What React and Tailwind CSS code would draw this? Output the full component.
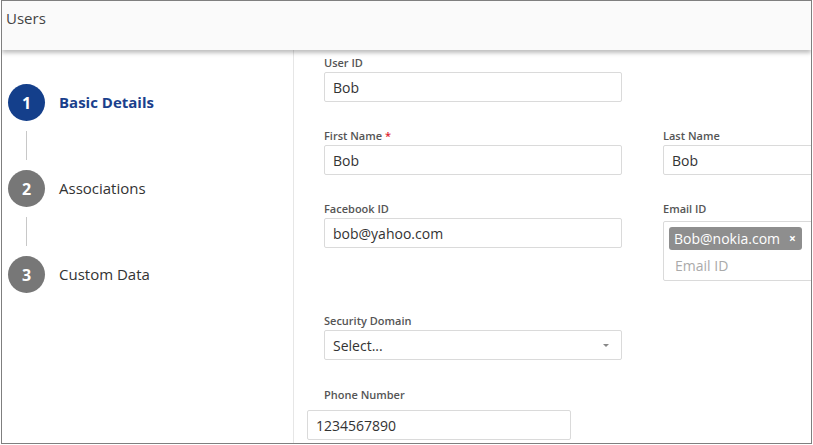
import React from 'react';

const font = { fontFamily: '"Open Sans", "Noto Sans", sans-serif' };

const steps = [
  { n: 1, label: 'Basic Details', active: true },
  { n: 2, label: 'Associations' },
  { n: 3, label: 'Custom Data' },
];

const Label = ({ children, required }) => (
  <div className="text-[11px] leading-[14px] font-semibold text-[#555] mb-[2px]">
    {children}
    {required && <span className="text-[#e0262f] ml-[3px]">*</span>}
  </div>
);

const Input = ({ value, className = '' }) => (
  <div
    className={`h-[30px] border border-[#dadada] rounded-[2px] bg-white flex items-center pl-[8px] text-[14px] text-[#333] ${className}`}
  >
    {value}
  </div>
);

const Stepper = () => (
  <div className="w-[292px] shrink-0 border-r border-[#e6e6e6] pt-[34px]">
    {steps.map((s, i) => (
      <div key={s.n}>
        <div className="flex items-center pl-[6px]">
          <div
            className={`w-[37px] h-[37px] rounded-full flex items-center justify-center text-white text-[16px] font-bold ${
              s.active ? 'bg-[#143f8b]' : 'bg-[#777777]'
            }`}
          >
            {s.n}
          </div>
          <div
            className={`ml-[14px] text-[15px] ${
              s.active ? 'font-bold text-[#1a3f8c]' : 'text-[#333]'
            }`}
          >
            {s.label}
          </div>
        </div>
        {i < steps.length - 1 && (
          <div className="pl-[24px] py-[10px]">
            <div className="w-px h-[29px] bg-[#c8c8c8]"></div>
          </div>
        )}
      </div>
    ))}
  </div>
);

export default function App() {
  return (
    <div
      className="ml-px w-[811px] h-[444px] border border-[#7f7f7f] overflow-hidden bg-white flex flex-col"
      style={font}
    >
      {/* header */}
      <div className="relative z-10 h-[49px] shrink-0 bg-[#fafafa] shadow-[0_3px_4px_rgba(0,0,0,0.25)] pl-[4px] pt-[5px]">
        <span className="text-[15px] leading-[20px] text-[#444]">Users</span>
      </div>

      <div className="flex flex-1 min-h-0">
        <Stepper />

        {/* form */}
        <div className="flex-1 pl-[30px] pt-[6px]">
          <div className="w-[298px]">
            <Label>User ID</Label>
            <Input value="Bob" />
          </div>

          <div className="flex mt-[27px] gap-[41px]">
            <div className="w-[298px] shrink-0">
              <Label required>First Name</Label>
              <Input value="Bob" />
            </div>
            <div className="w-[298px] shrink-0">
              <Label>Last Name</Label>
              <Input value="Bob" />
            </div>
          </div>

          <div className="flex mt-[27px] gap-[41px] items-start">
            <div className="w-[298px] shrink-0">
              <Label>Facebook ID</Label>
              <Input value="bob@yahoo.com" />
            </div>
            <div className="w-[298px] shrink-0">
              <Label>Email ID</Label>
              <div className="mt-[5px] h-[60px] border border-[#dadada] rounded-[2px] pl-[5px] pt-[4px]">
                <div className="inline-flex items-center h-[23px] rounded-[3px] bg-[#8e8e8e] text-white text-[14px] pl-[5px] pr-[6px]">
                  Bob@nokia.com
                  <span className="ml-[9px] text-[12px] font-bold">×</span>
                </div>
                <div className="pl-[6px] mt-[6px] text-[14px] text-[#aaa] leading-[20px]">Email ID</div>
              </div>
            </div>
          </div>

          <div className="w-[298px] mt-[33px]">
            <Label>Security Domain</Label>
            <div className="h-[30px] border border-[#dadada] rounded-[2px] flex items-center justify-between pl-[8px] pr-[12px] text-[14px] text-[#333]">
              <span>Select...</span>
              <span className="w-0 h-0 border-l-[3px] border-r-[3px] border-t-[3px] border-l-transparent border-r-transparent border-t-[#888]"></span>
            </div>
          </div>

          <div className="mt-[28px]">
            <div className="text-[11px] leading-[14px] font-semibold text-[#555] mb-[8px]">Phone Number</div>
            <Input value="1234567890" className="w-[264px] -ml-[17px]" />
          </div>
        </div>
      </div>
    </div>
  );
}
